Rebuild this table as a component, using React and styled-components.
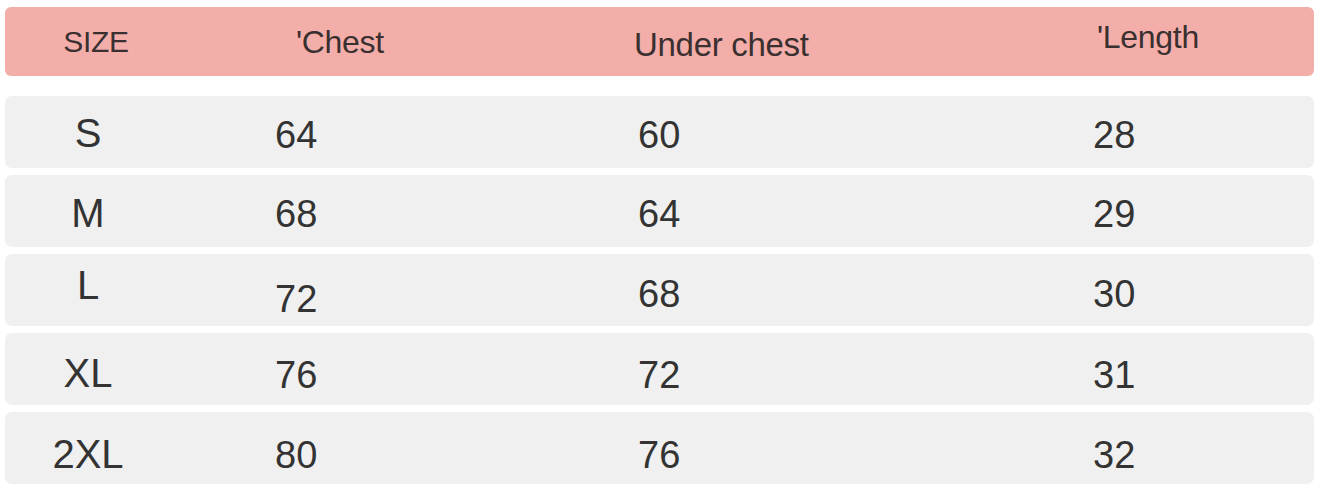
import React from "react";
import styled, { createGlobalStyle } from "styled-components";

const GlobalStyle = createGlobalStyle`
  html, body {
    margin: 0;
    padding: 0;
    background: #ffffff;
  }
  body {
    font-family: "Liberation Sans", Arial, sans-serif;
    color: #333333;
  }
`;

const Chart = styled.div`
  width: 1321px;
  height: 484px;
  overflow: hidden;
  padding: 7px 7px 0 5px;
  box-sizing: border-box;
  display: flex;
  flex-direction: column;
  gap: 7px;
`;

const Header = styled.div`
  display: grid;
  grid-template-columns: 270px 363px 455px 1fr;
  align-items: center;
  height: 69px;
  flex-shrink: 0;
  margin-bottom: 13px;
  background: #f4aeaa;
  border-radius: 6px;
  color: #3a3030;
`;

const HeadCell = styled.div`
  font-size: ${(p) => p.$size || 32}px;
  margin-left: ${(p) => p.$left || 0}px;
  width: ${(p) => (p.$center ? "182px" : "auto")};
  text-align: ${(p) => (p.$center ? "center" : "left")};
  transform: translateY(${(p) => p.$dy || 0}px);
  letter-spacing: -0.3px;
`;

const Row = styled.div`
  display: grid;
  grid-template-columns: 270px 363px 455px 1fr;
  align-items: center;
  height: 72px;
  flex-shrink: 0;
  background: #f0f0f0;
  border-radius: 7px;
`;

const SizeCell = styled.div`
  width: 166px;
  text-align: center;
  font-size: 40px;
  transform: translateY(${(p) => p.$dy || 0}px);
`;

const Value = styled.div`
  font-size: 38px;
  transform: translateY(${(p) => p.$dy || 0}px);
`;

const rows = [
  { size: "S", chest: 64, under: 60, length: 28, dy: [1, 3, 3, 3] },
  { size: "M", chest: 68, under: 64, length: 29, dy: [2, 3, 3, 3] },
  { size: "L", chest: 72, under: 68, length: 30, dy: [-5, 9, 4, 4] },
  { size: "XL", chest: 76, under: 72, length: 31, dy: [4, 6, 6, 6] },
  { size: "2XL", chest: 80, under: 76, length: 32, dy: [6, 7, 7, 7] },
];

export default function App() {
  return (
    <>
      <GlobalStyle />
      <Chart>
        <Header>
          <HeadCell $center $size={30} $dy={0}>SIZE</HeadCell>
          <HeadCell $left={21} $dy={1}>'Chest</HeadCell>
          <HeadCell $left={-4} $size={33} $dy={3}>Under chest</HeadCell>
          <HeadCell $left={4} $dy={-4}>'Length</HeadCell>
        </Header>
        {rows.map((r) => (
          <Row key={r.size}>
            <SizeCell $dy={r.dy[0]}>{r.size}</SizeCell>
            <Value $dy={r.dy[1]}>{r.chest}</Value>
            <Value $dy={r.dy[2]}>{r.under}</Value>
            <Value $dy={r.dy[3]}>{r.length}</Value>
          </Row>
        ))}
      </Chart>
    </>
  );
}
